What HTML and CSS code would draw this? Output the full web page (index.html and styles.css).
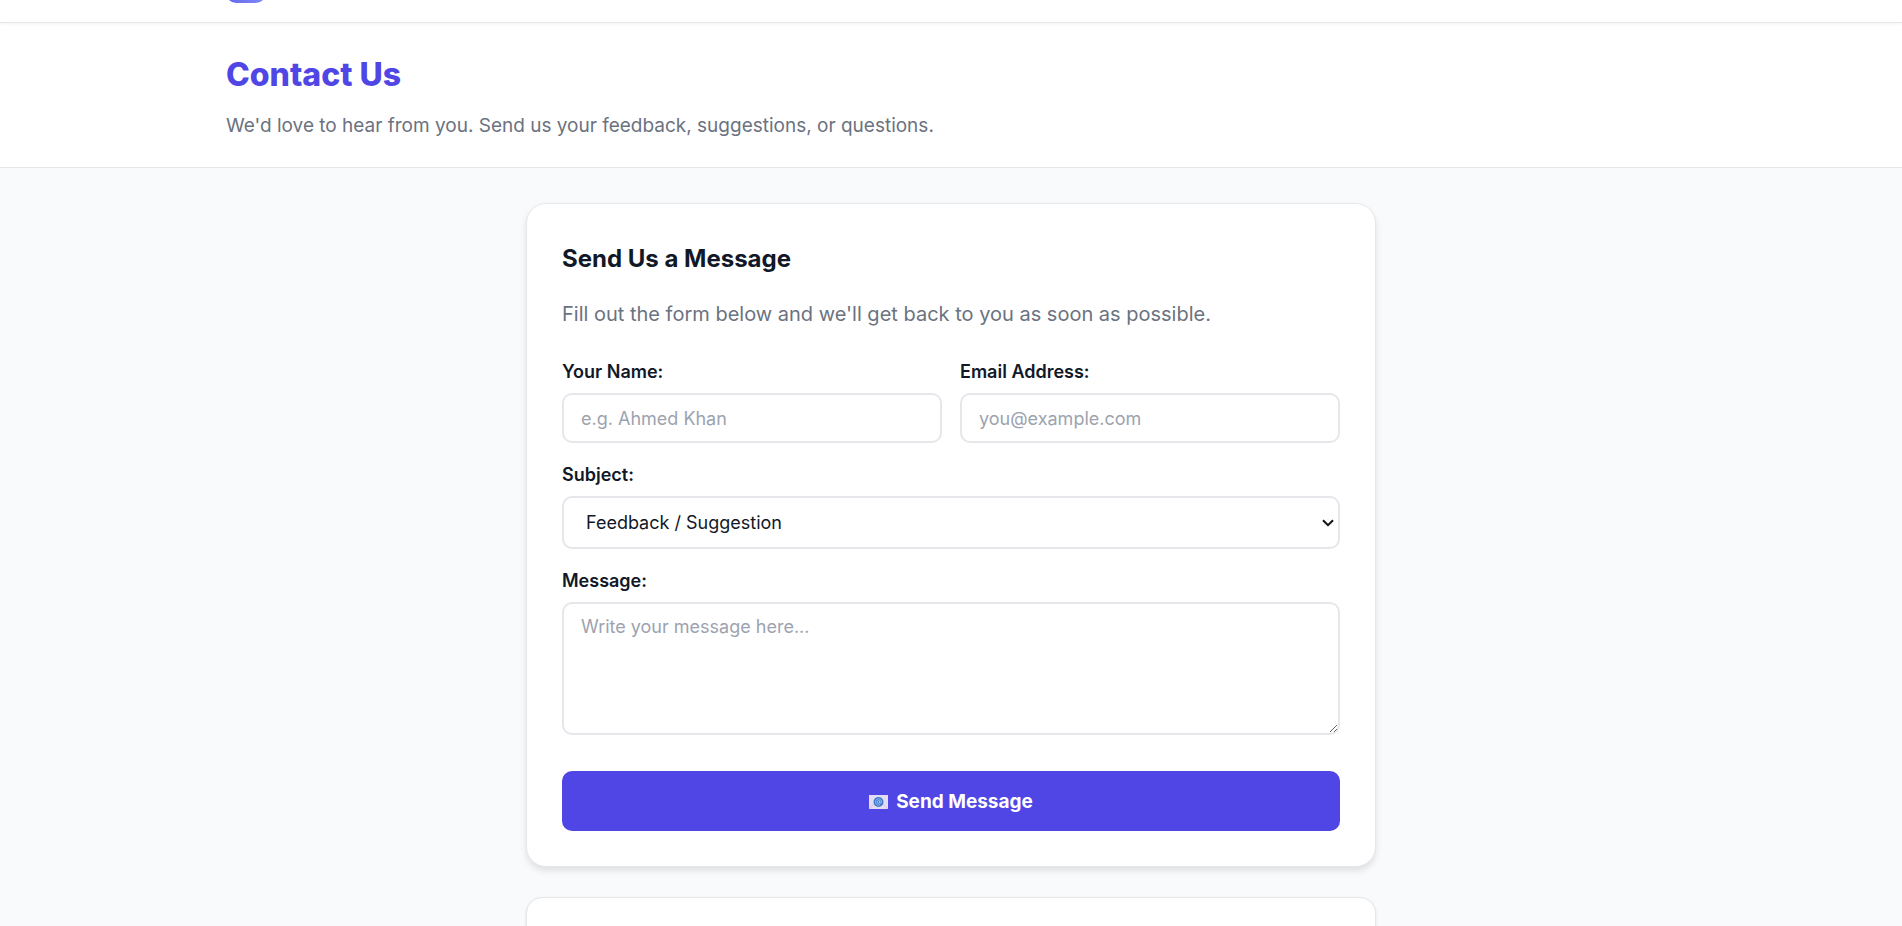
FILE: index.html
```html
<!DOCTYPE html>
<html lang="en">
<head>
    <meta charset="UTF-8">
    <title>Contact Us</title>
    <meta name="viewport" content="width=device-width, initial-scale=1.0">
    <link rel="stylesheet" href="styles.css">
</head>
<body>
    <header class="site-header">
        <div class="container">
            <div class="logo"></div>
        </div>
    </header>

    <section class="page-header">
        <div class="container">
            <h1>Contact Us</h1>
            <p>We'd love to hear from you. Send us your feedback, suggestions, or questions.</p>
        </div>
    </section>

    <main class="content">
        <section class="card">
            <h2>Send Us a Message</h2>
            <p class="intro">Fill out the form below and we'll get back to you as soon as possible.</p>
            <form class="contact-form">
                <div class="form-row">
                    <div class="form-group">
                        <label for="name">Your Name:</label>
                        <input type="text" id="name" name="name" placeholder="e.g. Ahmed Khan" required>
                    </div>
                    <div class="form-group">
                        <label for="email">Email Address:</label>
                        <input type="email" id="email" name="email" placeholder="you@example.com" required>
                    </div>
                </div>
                <div class="form-group">
                    <label for="subject">Subject:</label>
                    <select id="subject" name="subject">
                        <option>Feedback / Suggestion</option>
                    </select>
                </div>
                <div class="form-group">
                    <label for="message">Message:</label>
                    <textarea id="message" name="message" placeholder="Write your message here..." required></textarea>
                </div>
                <button type="submit" class="btn">
                    <svg class="mail-icon" viewBox="0 0 19 14" aria-hidden="true">
                        <rect width="19" height="14" fill="#e4dcf3"/>
                        <path d="M0 14 7 7M19 14l-7-7" stroke="#cfc6e8" stroke-width="1"/>
                        <circle cx="9.5" cy="7" r="5" fill="#3f78cf"/>
                        <circle cx="9.5" cy="7" r="1.4" fill="none" stroke="#c9dcf5" stroke-width=".7"/>
                        <path d="M10.9 5.6v1.8c0 1.2 1.7 1 1.7-.4a3.1 3.1 0 1 0-1.5 2.6" fill="none" stroke="#c9dcf5" stroke-width=".6"/>
                    </svg>
                    Send Message
                </button>
            </form>
        </section>

        <section class="card card-info"></section>
    </main>
</body>
</html>
```

FILE: styles.css
```css
:root {
    --primary: #4f46e5;
    --primary-light: #818cf8;
    --bg: #f9fafc;
    --card-bg: #ffffff;
    --border: #e5e7eb;
    --text: #111827;
    --muted: #6b7280;
    --placeholder: #9ca3af;
    --shadow: 0 4px 6px rgba(0, 0, 0, 0.1);
}
* {
    box-sizing: border-box;
    margin: 0;
    padding: 0;
}
body {
    background: var(--bg);
    color: var(--text);
    font-family: 'Inter', Arial, sans-serif;
    font-size: 18px;
    line-height: 1.6;
}
.container {
    max-width: 1500px;
    margin: 0 auto;
    padding: 0 25px;
}
.site-header {
    margin-top: -56px;
    padding: 21px 0 19px;
    background: var(--card-bg);
    border-bottom: 1px solid var(--border);
    box-shadow: 0 1px 3px rgba(0, 0, 0, 0.05);
    position: relative;
}
.logo {
    width: 40px;
    height: 38px;
    border-radius: 10px;
    background: linear-gradient(135deg, var(--primary), var(--primary-light));
}
.page-header {
    background: var(--card-bg);
    border-bottom: 1px solid var(--border);
    padding: 26px 0;
}
.page-header h1 {
    color: var(--primary);
    font-size: 32px;
    font-weight: 800;
    line-height: 52px;
    margin-bottom: 10px;
}
.page-header p {
    color: var(--muted);
    font-size: 19px;
    line-height: 30px;
}
.content {
    max-width: 850px;
    margin: 0 auto;
    padding: 35px 0;
}
.card {
    background: var(--card-bg);
    border: 1px solid var(--border);
    border-radius: 20px;
    box-shadow: var(--shadow);
    padding: 35px;
    margin-bottom: 30px;
}
.card-info {
    min-height: 200px;
    border-radius: 16px;
    box-shadow: 0 1px 3px rgba(0, 0, 0, 0.1);
}
.card h2 {
    font-size: 24px;
    font-weight: 700;
    line-height: 40px;
    margin-bottom: 19px;
}
.card .intro {
    color: var(--muted);
    font-size: 20px;
    line-height: 32px;
    margin-bottom: 28px;
}
.contact-form {
    display: flex;
    flex-direction: column;
    gap: 18px;
}
.form-row {
    display: grid;
    grid-template-columns: 1fr 1fr;
    gap: 18px;
}
.form-group {
    display: flex;
    flex-direction: column;
    gap: 8px;
}
.form-group label {
    font-size: 18px;
    font-weight: 600;
    line-height: 27px;
}
.form-group input,
.form-group select,
.form-group textarea {
    width: 100%;
    padding: 12px 17px;
    border: 2px solid var(--border);
    border-radius: 10px;
    background: var(--card-bg);
    color: var(--text);
    font-family: inherit;
    font-size: 18px;
}
.form-group input {
    height: 50px;
}
.form-group select {
    height: 53px;
    padding: 12px 22px;
    appearance: none;
    background: var(--card-bg) url("data:image/svg+xml,%3Csvg xmlns='http://www.w3.org/2000/svg' width='12' height='8' viewBox='0 0 12 8'%3E%3Cpath d='M1 1.2l5 5 5-5' fill='none' stroke='%23111' stroke-width='2'/%3E%3C/svg%3E") no-repeat right 4px center;
}
.form-group textarea {
    height: 133px;
    resize: vertical;
}
.form-group input::placeholder,
.form-group textarea::placeholder {
    color: var(--placeholder);
}
.form-group input:focus,
.form-group select:focus,
.form-group textarea:focus {
    border-color: var(--primary);
    outline: none;
}
.btn {
    display: flex;
    align-items: center;
    justify-content: center;
    gap: 8px;
    margin-top: 18px;
    padding: 16px 15px 14px;
    border: none;
    border-radius: 10px;
    background: var(--primary);
    color: #fff;
    font-family: inherit;
    font-size: 19px;
    font-weight: 700;
    line-height: 30px;
    cursor: pointer;
}
.btn:hover {
    background: #4338ca;
}
.mail-icon {
    width: 19px;
    height: 14px;
}
@media (max-width: 900px) {
    .content {
        padding: 20px;
    }
    .form-row {
        grid-template-columns: 1fr;
    }
}
```
